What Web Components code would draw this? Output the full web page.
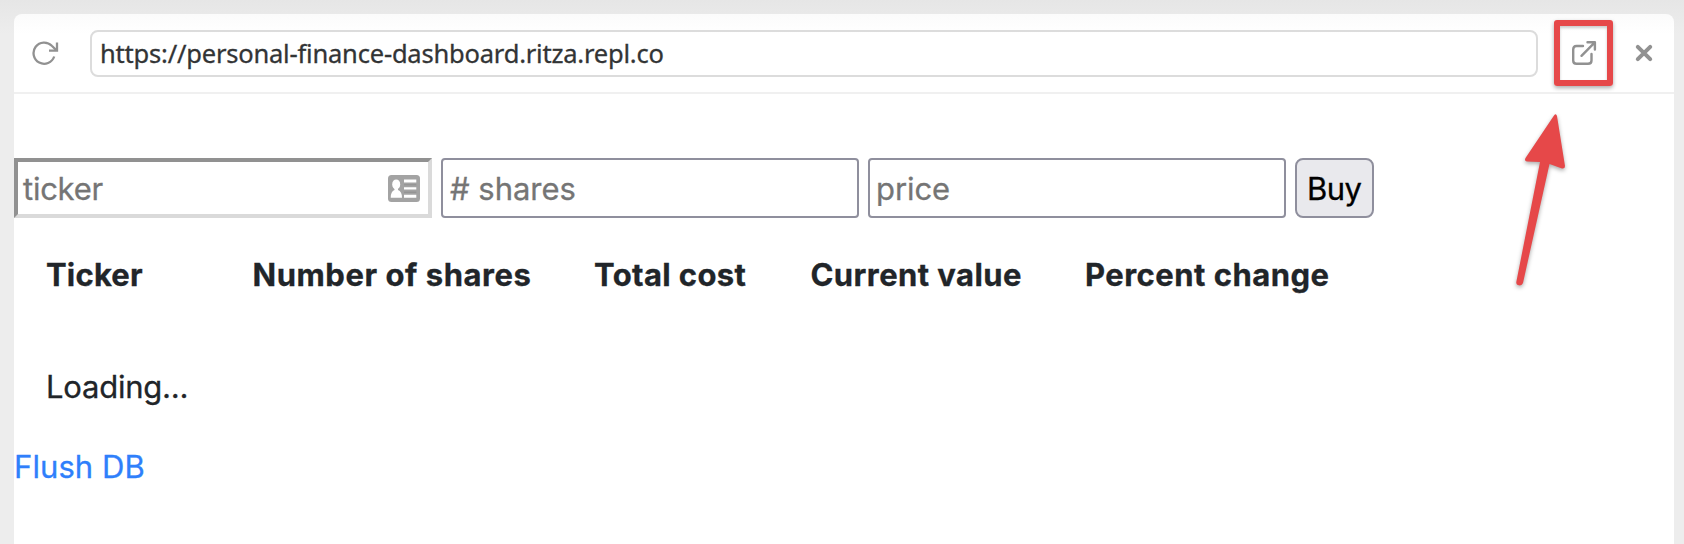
<!DOCTYPE html>
<html lang="en">
<head>
<meta charset="utf-8">
<title>Personal finance dashboard</title>
<style>
html,body{margin:0;height:100%;overflow:hidden;background:#ededed}
body{font-family:Inter,"Liberation Sans",sans-serif;color:#212529}
</style>
</head>
<body>
<preview-window></preview-window>
<script>
const define = (name, html, setup) => customElements.define(name, class extends HTMLElement {
  connectedCallback() {
    if (this.shadowRoot) return;
    this.attachShadow({ mode: 'open' }).innerHTML = html;
    if (setup) setup(this);
  }
});

// A single line whose glyphs span exactly the width in the "span" attribute.
define('fitted-text', `<style>:host{display:block;white-space:pre;font-kerning:normal;-webkit-text-stroke:.3px currentColor}span{display:inline-block}</style><span><slot></slot></span>`, el => {
  const cs = getComputedStyle(el);
  const ctx = document.createElement('canvas').getContext('2d');
  ctx.font = `${cs.fontWeight} ${cs.fontSize} ${cs.fontFamily}`;
  const text = el.textContent;
  const m = ctx.measureText(text);
  const ink = m.actualBoundingBoxLeft + m.actualBoundingBoxRight;
  const span = el.shadowRoot.querySelector('span');
  span.style.letterSpacing = ((+el.getAttribute('span') - ink) / (text.length - 1)) + 'px';
  span.style.marginLeft = m.actualBoundingBoxLeft + 'px';
});

define('reload-icon', `<style>:host{display:block;width:28px;height:28px}svg{display:block}</style>
<svg width="28" height="28" viewBox="0 0 28 28" fill="none" stroke="#919191" stroke-width="2.300"><path d="M22.200 17.500A10.600 10.600 0 1 1 19.800 6.800L24.500 11.300"/><path d="M25 3.500V11.700H17"/></svg>`);

define('open-icon', `<style>:host{display:block;width:24px;height:24px}svg{display:block;overflow:visible}</style>
<svg width="24" height="24" viewBox="0 0 24 24" fill="none" stroke="#919191" stroke-width="2.400" stroke-linecap="round" stroke-linejoin="round"><path d="M11 5H4.500Q1.200 5 1.200 8.500V19.500Q1.200 22.800 4.500 22.800H16Q19.500 22.800 19.500 19.500V13"/><path d="M9.500 14.800L22.800 1.400M15.500 1.300H22.900V8.500"/></svg>`);

define('close-icon', `<style>:host{display:block;width:16px;height:16px}svg{display:block;overflow:visible}</style>
<svg width="16" height="16" viewBox="0 0 16 16" fill="none" stroke="#919191" stroke-width="4" stroke-linecap="round"><path d="M1.800 1.800L14.200 14.200M14.200 1.800L1.800 14.200"/></svg>`);

define('contact-icon', `<style>:host{display:block;width:32px;height:27px}svg{display:block}</style>
<svg width="32" height="27" viewBox="0 0 32 27"><rect width="32" height="27" rx="3.500" fill="#a3a3a3"/><g fill="#fff"><ellipse cx="8.200" cy="9.400" rx="4" ry="5"/><path d="M6.500 12H10V15Q14 16.500 14 22.700H2.700Q2.700 16.500 6.500 15Z"/><path d="M16 4.600H28.300V7.400H16ZM16 12.200H28.300V14.600H16ZM16 19.800H28.300V22.700H16Z"/></g><path d="M16 9.800H28.300M16 17.200H28.300" stroke="#8f8f8f" stroke-width="1"/></svg>`);

define('url-bar', `<style>
:host{display:flex;box-sizing:border-box;height:80px;border-bottom:2px solid #f0f0f0;align-items:flex-start}
reload-icon{margin:25px 0 0 18px}
.url{box-sizing:border-box;margin:16px 0 0 30px;width:1448px;height:47px;border:2px solid #dcdcdc;border-radius:8px;padding-left:10px;font:25.500px/43px "Noto Sans",sans-serif;color:#323435}
.target{box-sizing:border-box;margin:6px 0 0 16px;width:59px;height:66px;border:6px solid #e64849;border-radius:3px;padding:15px 0 0 12px;box-shadow:0 2px 4px #0005,inset 0 2px 3px #0003}
close-icon{margin:31px 0 0 23px}
</style><reload-icon></reload-icon><div class="url"><fitted-text span="561.500">https://personal-finance-dashboard.ritza.repl.co</fitted-text></div><div class="target"><open-icon></open-icon></div><close-icon></close-icon>`);

define('text-field', `<style>
:host{display:flex;align-items:center;justify-content:space-between;box-sizing:border-box;width:418px;height:60px;border:2px solid #8f8f9d;border-radius:4px;padding:1px 8px 0 7px;color:#757575;line-height:48px;background:#fff}
:host([inset]){border:4px solid;border-color:#919191 #dadada #dadada #919191;border-radius:0;padding:1px 8px 0 5px}
</style><slot></slot><slot name="icon"></slot>`);

define('push-button', `<style>
:host{display:block;box-sizing:border-box;width:79px;height:60px;border:2px solid #8f8f9d;border-radius:8px;background:#e9e9ed;color:#000;padding:4.500px 0 0 12px;line-height:48px}
</style><slot></slot>`);

define('trade-form', `<style>
:host{display:flex;margin-top:64px;gap:9px}
text-field:nth-of-type(3){padding-left:8px}
</style>
<text-field inset><fitted-text span="79.500">ticker</fitted-text><contact-icon slot="icon"></contact-icon></text-field>
<text-field><fitted-text span="124.500"># shares</fitted-text></text-field>
<text-field><fitted-text span="71">price</fitted-text></text-field>
<push-button><fitted-text span="52.500">Buy</fitted-text></push-button>`);

define('holdings-table', `<style>
:host{display:block;padding:33.400px 0 0 33px;line-height:48px}
.head{display:grid;grid-template-columns:207.500px 340.500px 216.500px 275.500px auto;font-weight:700}
.body{margin:64px 0 0 1px}
</style>
<div class="head"><fitted-text span="96">Ticker</fitted-text><fitted-text span="276">Number of shares</fitted-text><fitted-text span="150.500">Total cost</fitted-text><fitted-text span="209.500">Current value</fitted-text><fitted-text span="241.500">Percent change</fitted-text></div>
<div class="body"><fitted-text span="138.500">Loading...</fitted-text></div>`);

define('red-arrow', `<style>:host{position:absolute;left:1500px;top:100px}svg{display:block;filter:drop-shadow(0 2px 2px #0005)}</style>
<svg width="80" height="200" viewBox="0 0 80 200"><path d="M54 15.500Q56 13 57 16L65 66Q65 69 62 68.500L49.500 64L23 183Q22 185.800 19 185.300Q16 185 16.300 182L40 62L27 61.500Q24 61 25.500 58Z" fill="#e64849"/></svg>`);

define('preview-window', `<style>
:host{display:block;box-sizing:border-box;height:544px;padding:14px 10px 0 14px;background:linear-gradient(#e6e6e6,#ededed 34px);font-size:31px}
.panel{height:530px;box-sizing:border-box;border-radius:8px 8px 0 0;background:linear-gradient(#fbfbfb,#fff 20px)}
a{display:block;margin:32px 0 0 2px;line-height:48px;color:#2f7ffb;text-decoration:none}
</style>
<div class="panel"><url-bar></url-bar><trade-form></trade-form><holdings-table></holdings-table><a href="#"><fitted-text span="127.500">Flush DB</fitted-text></a></div><red-arrow></red-arrow>`);
</script>
</body>
</html>
